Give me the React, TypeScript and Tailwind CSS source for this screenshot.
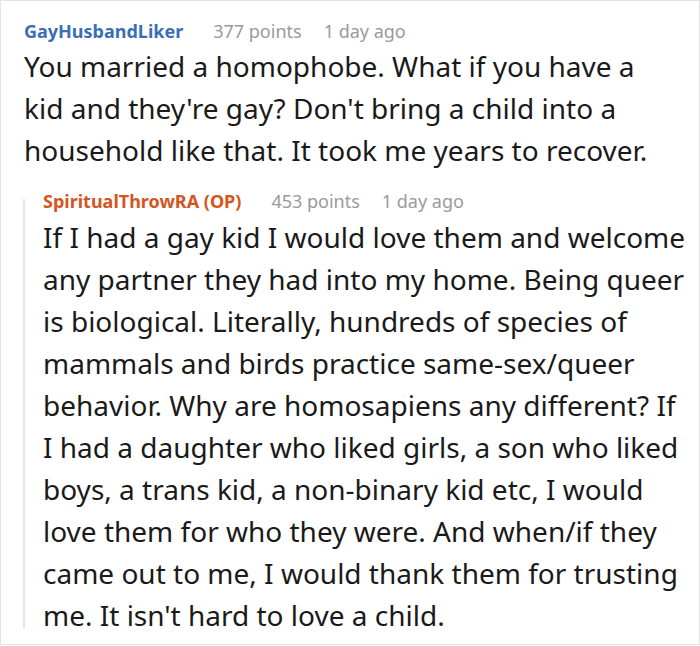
import React from "react";

export default function App() {
  return (
    <div className="w-[700px] h-[645px] bg-white border border-[#e3e3e3] overflow-hidden" style={{ fontFamily: '"Noto Sans", "Open Sans", sans-serif' }}>
      <div className="pl-[23px] pr-2 pt-[16px]">
        <div className="flex items-baseline text-[18px] leading-[28px]">
          <span className="font-bold text-[#3a6eb5]">GayHusbandLiker</span>
          <span className="ml-[30px] text-[#9a9a9a]">377 points</span>
          <span className="ml-[22px] text-[#9a9a9a]">1 day ago</span>
        </div>
        <p className="text-[28px] leading-[42px] text-[#1a1a1a] pr-[40px]">
          You married a homophobe. What if you have a kid and they're gay? Don't bring a child into a household like that. It took me years to recover.
        </p>
        <div className="mt-[16px] ml-[-1px] flex">
          <div className="w-[2px] shrink-0 bg-[#e6e6e6] mt-[12px] mb-[8px]" />
          <div className="pl-[18px] flex-1">
            <div className="flex items-baseline text-[18px] leading-[28px]">
              <span className="font-bold text-[#d4561f]">SpiritualThrowRA (OP)</span>
              <span className="ml-[30px] text-[#9a9a9a]">453 points</span>
              <span className="ml-[22px] text-[#9a9a9a]">1 day ago</span>
            </div>
            <p className="text-[28px] leading-[42px] text-[#1a1a1a] mt-[1px]">
              If I had a gay kid I would love them and welcome any partner they had into my home. Being queer is biological. Literally, hundreds of species of mammals and birds practice same-sex/queer behavior. Why are homosapiens any different? If I had a daughter who liked girls, a son who liked boys, a trans kid, a non-binary kid etc, I would love them for who they were. And when/if they came out to me, I would thank them for trusting me. It isn't hard to love a child.
            </p>
          </div>
        </div>
      </div>
    </div>
  );
}
